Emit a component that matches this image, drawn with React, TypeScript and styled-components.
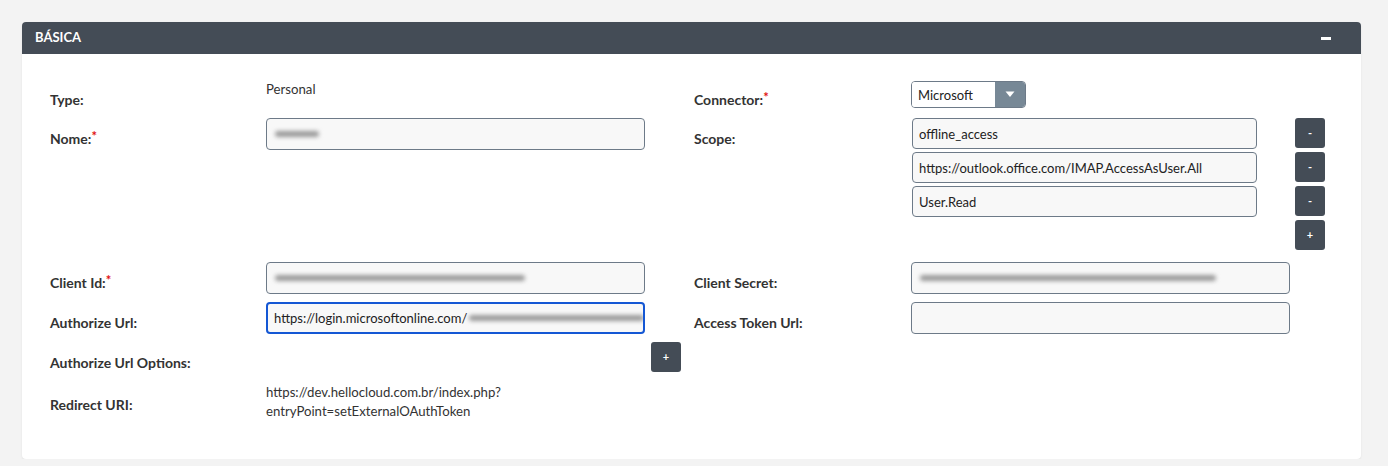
import styled, { createGlobalStyle } from "styled-components";

const GlobalStyle = createGlobalStyle`
  html, body {
    margin: 0;
    padding: 0;
    background: #f3f3f3;
    font-family: Lato, "Open Sans", "Liberation Sans", sans-serif;
    color: #333;
  }
`;

const Page = styled.div`
  padding: 22px 27px 0 22px;
`;

const Panel = styled.section`
  background: #fff;
  border-radius: 4px;
  box-shadow: 0 1px 2px rgba(0, 0, 0, 0.08);
`;

const PanelHeader = styled.header`
  display: flex;
  align-items: center;
  justify-content: space-between;
  box-sizing: border-box;
  height: 32px;
  padding: 0 30px 3px 13px;
  background: #444c56;
  border-radius: 4px 4px 0 0;
  color: #fff;
  font-size: 13px;
  font-weight: 700;
`;

const Collapse = styled.span`
  display: block;
  width: 10px;
  height: 3px;
  margin-top: 3px;
  background: #fff;
`;

const Body = styled.div`
  display: grid;
  grid-template-columns: 216px 379px 49px 217px 379px 1fr;
  grid-template-rows: 39px 144px 40px 40px 41px auto;
  padding: 25px 0 38px 28px;
`;

const Label = styled.div<{ $top?: number }>`
  padding-top: ${({ $top }) => ($top ?? 11)}px;
  font-size: 14px;
  font-weight: 700;
  line-height: 20px;
  color: #333;
`;

const Req = styled.span`
  color: #e01010;
  font-size: 13px;
  vertical-align: top;
  position: relative;
  top: -3px;
`;

const Cell = styled.div<{ $span?: number }>`
  grid-column: span ${({ $span }) => $span ?? 1};
`;

const Value = styled.div<{ $top?: number }>`
  padding-top: ${({ $top }) => ($top ?? 0)}px;
  font-size: 13.2px;
  line-height: 19px;
  color: #333;
`;

const Field = styled.div<{ $w?: number; $h?: number; $focus?: boolean }>`
  box-sizing: border-box;
  display: flex;
  align-items: center;
  width: ${({ $w }) => ($w ? `${$w}px` : "100%")};
  height: ${({ $h }) => $h ?? 32}px;
  padding: 0 6px;
  background: #f8f8f8;
  border: ${({ $focus }) => ($focus ? "2px solid #1457d4" : "1px solid #6d7a88")};
  border-radius: 4px;
  font-size: 13px;
  color: #222;
  white-space: nowrap;
  overflow: hidden;
`;

const Redacted = styled.span<{ $w: number }>`
  display: inline-block;
  flex-shrink: 0;
  width: ${({ $w }) => $w}px;
  height: 6px;
  margin-left: 2px;
  background: #999;
  border-radius: 3px;
  filter: blur(2px);
`;

const Select = styled.div`
  box-sizing: border-box;
  display: flex;
  width: 115px;
  height: 27px;
  margin-top: 2px;
  border: 1px solid #6d7a88;
  border-radius: 4px;
  overflow: hidden;
  font-size: 13px;
`;

const SelectText = styled.span`
  flex: 1;
  display: flex;
  align-items: center;
  padding-left: 6px;
  background: #fff;
  color: #222;
`;

const SelectArrow = styled.span`
  display: flex;
  align-items: center;
  justify-content: center;
  width: 30px;
  background: #778896;
`;

const ScopeBlock = styled.div`
  display: flex;
  align-items: flex-start;
  gap: 38px;
`;

const ScopeList = styled.div`
  display: flex;
  flex-direction: column;
  gap: 3px;
  margin-left: 1px;
`;

const ButtonStack = styled.div`
  display: flex;
  flex-direction: column;
  gap: 4px;
`;

const SmallButton = styled.button<{ $ml?: number }>`
  width: 30px;
  height: 30px;
  margin: 0 0 0 ${({ $ml }) => $ml ?? 0}px;
  padding: 0;
  border: none;
  border-radius: 3px;
  background: #444c56;
  color: #fff;
  font-family: inherit;
  font-size: 11px;
  font-weight: 700;
  line-height: 30px;
  cursor: pointer;
`;

const Caret = () => (
  <svg width="10" height="7" viewBox="0 0 10 7">
    <path d="M0.5 0.5h9L5 6z" fill="#fff" />
  </svg>
);

const Required = ({ children }: { children: string }) => (
  <>
    {children}
    <Req>*</Req>
  </>
);

const scopes = ["offline_access", "https://outlook.office.com/IMAP.AccessAsUser.All", "User.Read"];

export default function App() {
  return (
    <>
      <GlobalStyle />
      <Page>
        <Panel>
          <PanelHeader>
            BÁSICA
            <Collapse />
          </PanelHeader>
          <Body>
            {/* row 1 */}
            <Label>Type:</Label>
            <Value $top={1}>Personal</Value>
            <Cell />
            <Label>
              <Required>Connector:</Required>
            </Label>
            <Cell $span={2}>
              <Select>
                <SelectText>Microsoft</SelectText>
                <SelectArrow>
                  <Caret />
                </SelectArrow>
              </Select>
            </Cell>

            {/* row 2 */}
            <Label>
              <Required>Nome:</Required>
            </Label>
            <Cell>
              <Field>
                <Redacted $w={44} />
              </Field>
            </Cell>
            <Cell />
            <Label>Scope:</Label>
            <Cell $span={2}>
              <ScopeBlock>
                <ScopeList>
                  {scopes.map((s) => (
                    <Field key={s} $w={345} $h={31}>
                      {s}
                    </Field>
                  ))}
                </ScopeList>
                <ButtonStack>
                  <SmallButton>-</SmallButton>
                  <SmallButton>-</SmallButton>
                  <SmallButton>-</SmallButton>
                  <SmallButton>+</SmallButton>
                </ButtonStack>
              </ScopeBlock>
            </Cell>

            {/* row 3 */}
            <Label>
              <Required>Client Id:</Required>
            </Label>
            <Cell>
              <Field>
                <Redacted $w={250} />
              </Field>
            </Cell>
            <Cell />
            <Label>Client Secret:</Label>
            <Cell $span={2}>
              <Field $w={379}>
                <Redacted $w={296} />
              </Field>
            </Cell>

            {/* row 4 */}
            <Label>Authorize Url:</Label>
            <Cell>
              <Field $focus>
                https://login.microsoftonline.com/
                <Redacted $w={175} />
              </Field>
            </Cell>
            <Cell />
            <Label>Access Token Url:</Label>
            <Cell $span={2}>
              <Field $w={379} />
            </Cell>

            {/* row 5 */}
            <Label>Authorize Url Options:</Label>
            <Cell />
            <Cell>
              <SmallButton $ml={6}>+</SmallButton>
            </Cell>
            <Cell $span={3} />

            {/* row 6 */}
            <Label $top={12}>Redirect URI:</Label>
            <Cell $span={2}>
              <Value>
                https://dev.hellocloud.com.br/index.php?
                <br />
                entryPoint=setExternalOAuthToken
              </Value>
            </Cell>
            <Cell $span={3} />
          </Body>
        </Panel>
      </Page>
    </>
  );
}
